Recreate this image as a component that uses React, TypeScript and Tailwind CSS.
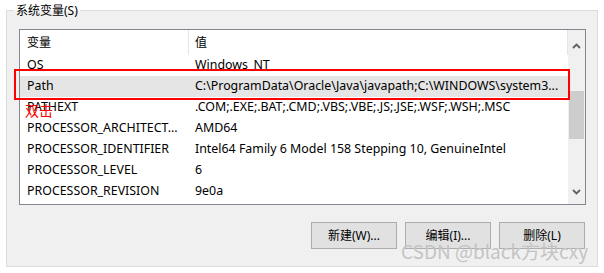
import React from 'react';

const rows = [
  { name: 'OS', value: 'Windows_NT' },
  { name: 'Path', value: 'C:\\ProgramData\\Oracle\\Java\\javapath;C:\\WINDOWS\\system3...', selected: true },
  { name: 'PATHEXT', value: '.COM;.EXE;.BAT;.CMD;.VBS;.VBE;.JS;.JSE;.WSF;.WSH;.MSC' },
  { name: 'PROCESSOR_ARCHITECT...', value: 'AMD64' },
  { name: 'PROCESSOR_IDENTIFIER', value: 'Intel64 Family 6 Model 158 Stepping 10, GenuineIntel' },
  { name: 'PROCESSOR_LEVEL', value: '6' },
  { name: 'PROCESSOR_REVISION', value: '9e0a' },
];

function Chevron({ up }: { up?: boolean }) {
  return (
    <svg width="9" height="6" viewBox="0 0 9 6">
      <path
        d={up ? 'M1 5 L4.5 1.5 L8 5' : 'M1 1 L4.5 4.5 L8 1'}
        fill="none"
        stroke="#606060"
        strokeWidth="1.8"
      />
    </svg>
  );
}

export default function App() {
  return (
    <div
      className="relative w-[604px] h-[273px] bg-white overflow-hidden text-[12px] text-black"
      style={{ fontFamily: '"Noto Sans", "Noto Sans CJK SC", sans-serif' }}
    >
      {/* group box */}
      <div className="relative ml-[6px] mt-[10px] w-[592px] h-[257px] border border-[#dcdcdc] bg-[#f0f0f0] pt-[18px] pl-[12px]">
        <div className="absolute left-[7px] -top-[8px] px-[2px] leading-[16px] bg-[linear-gradient(to_bottom,#ffffff_50%,#f0f0f0_50%)]">
          系统变量(S)
        </div>

        {/* list box */}
        <div className="flex w-[567px] h-[176px] border border-[#828790] bg-white text-[12.4px]">
          <div className="flex-1 flex flex-col">
            <div className="flex h-[25px] items-center text-[12px]">
              <div className="w-[168px] pl-[7px] h-full flex items-center">变量</div>
              <div className="flex-1 h-full flex items-center border-l border-[#e5e5e5] pl-[6px] border-r">值</div>
            </div>
            {rows.map((r) => (
              <div
                key={r.name}
                className={`flex h-[21px] items-center whitespace-nowrap ${r.selected ? 'bg-[#e5e5e5]' : ''}`}
              >
                <div className="w-[168px] pl-[7px]">{r.name}</div>
                <div className="flex-1 pl-[7px] overflow-hidden">{r.value}</div>
              </div>
            ))}
          </div>

          {/* scrollbar */}
          <div className="w-[17px] bg-[#f0f0f0] flex flex-col items-center">
            <div className="h-[19px] flex items-end justify-center">
              <Chevron up />
            </div>
            <div className="mt-[42px] w-[15px] h-[48px] bg-[#cdcdcd]" />
            <div className="flex-1" />
            <div className="h-[15px] flex items-start justify-center">
              <Chevron />
            </div>
          </div>
        </div>

        {/* buttons */}
        <div className="flex justify-end gap-[8px] mt-[17px] pr-[1px] w-[567px]">
          {['新建(W)...', '编辑(I)...', '删除(L)'].map((b) => (
            <div
              key={b}
              className="w-[86px] h-[27px] flex items-center justify-center bg-[#e1e1e1] border border-[#adadad]"
            >
              {b}
            </div>
          ))}
        </div>
      </div>

      {/* annotation */}
      <div className="absolute left-[14px] top-[69px] w-[556px] h-[31px] border-2 border-[#ff0000]" />
      <div className="absolute left-[25px] top-[103px] text-[14px] leading-[16px] text-[#ff0000]">双击</div>

      {/* watermark */}
      <div
        className="absolute left-[401px] top-[239px] text-[19px] leading-[24px] text-[#c4c4c4] whitespace-nowrap"
        style={{ fontFamily: '"Noto Sans CJK SC", sans-serif' }}
      >
        CSDN @black方块cxy
      </div>
    </div>
  );
}
